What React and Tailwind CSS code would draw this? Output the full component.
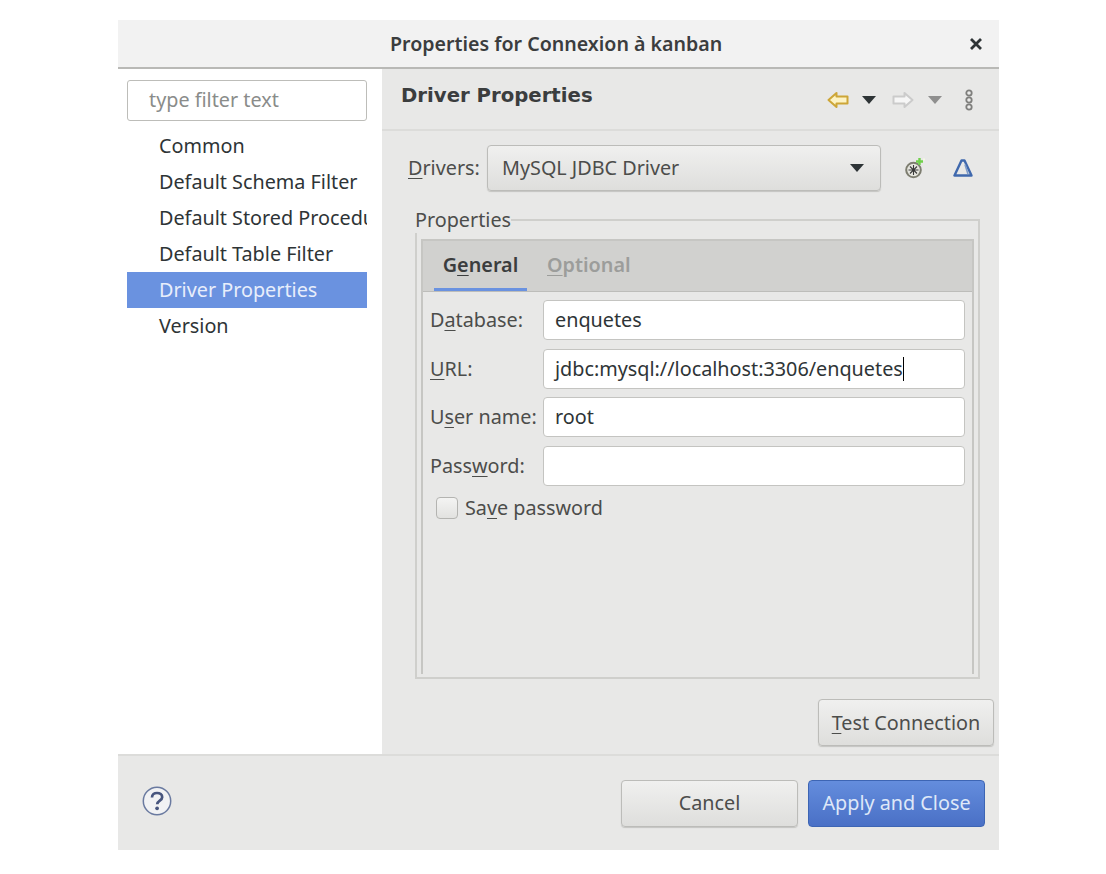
import React from 'react';

const textFont = "font-['Noto_Sans','Open_Sans',sans-serif]";

function Mnemonic({ text, at }) {
  return (
    <>
      {text.slice(0, at)}
      <span className="underline underline-offset-[3px] decoration-1">{text[at]}</span>
      {text.slice(at + 1)}
    </>
  );
}

function BackArrow() {
  return (
    <svg width="22" height="18" viewBox="0 0 22 18">
      <path d="M1.5 9 L9.5 2 V5.5 H20.5 V12.5 H9.5 V16 Z" fill="#fdf3c4" stroke="#cda637" strokeWidth="2" strokeLinejoin="round" />
    </svg>
  );
}

function ForwardArrow() {
  return (
    <svg width="22" height="18" viewBox="0 0 22 18">
      <path d="M20.5 9 L12.5 2 V5.5 H1.5 V12.5 H12.5 V16 Z" fill="#f6f6f6" stroke="#cbcbcb" strokeWidth="2" strokeLinejoin="round" />
    </svg>
  );
}

function Caret({ color }) {
  return (
    <svg width="14" height="8" viewBox="0 0 14 8">
      <path d="M0 0 H14 L7 8 Z" fill={color} />
    </svg>
  );
}

function MenuDots() {
  return (
    <svg width="10" height="22" viewBox="0 0 10 22">
      <circle cx="5" cy="4" r="2.7" fill="#ececeb" stroke="#7f7f7d" strokeWidth="1.8" />
      <circle cx="5" cy="11" r="2.7" fill="#ececeb" stroke="#7f7f7d" strokeWidth="1.8" />
      <circle cx="5" cy="18" r="2.7" fill="#ececeb" stroke="#7f7f7d" strokeWidth="1.8" />
    </svg>
  );
}

function NewDriver() {
  return (
    <svg width="22" height="22" viewBox="0 0 22 22">
      <circle cx="9.5" cy="13" r="7.3" fill="#e6e6df" stroke="#7d7d70" strokeWidth="2" />
      <path d="M9.5 8 V18 M4.5 13 H14.5 M6 9.5 L13 16.5 M13 9.5 L6 16.5" stroke="#3a3a3a" strokeWidth="1.1" />
      <path d="M15.5 1 V8 M12 4.5 H19" stroke="#6fd04a" strokeWidth="2.4" />
      <path d="M19 1.5 H21 V3.5 H19 Z" fill="#f5f8e6" />
    </svg>
  );
}

function Delta() {
  return (
    <svg width="20" height="18" viewBox="0 0 20 18">
      <path d="M8.5 1.5 L1.5 16.5 H18.5 L11.5 1.5 Z" fill="none" stroke="#3f68ad" strokeWidth="2.4" strokeLinejoin="round" />
      <path d="M12 5.5 L15 15" stroke="#7f9cc9" strokeWidth="1.6" />
    </svg>
  );
}

function HelpIcon() {
  return (
    <svg width="30" height="30" viewBox="0 0 30 30">
      <circle cx="15" cy="15" r="13.7" fill="#f1f2f4" stroke="#6a7aa0" strokeWidth="1.5" />
      <path d="M10 11.5 C10 8.5 12.3 7 15 7 C18 7 20.2 8.7 20.2 11.2 C20.2 14.6 15.4 14.6 15.2 18.2" fill="none" stroke="#47557e" strokeWidth="2.7" />
      <circle cx="15.1" cy="22.3" r="1.9" fill="#47557e" />
    </svg>
  );
}

function FieldRow({ label, value, cursor }) {
  return (
    <div className="flex items-center h-[40px]">
      <label className="w-[120px] pl-[7px] text-[#4c4d4b] whitespace-nowrap">{label}</label>
      <div className="w-[422px] h-[40px] bg-white border border-[#c4c4c1] rounded-[4px] px-[11px] flex items-center text-[#2e3436]">
        <span>{value}</span>
        {cursor && <span className="w-px h-[24px] bg-black" />}
      </div>
    </div>
  );
}

const pages = ['Common', 'Default Schema Filter', 'Default Stored Procedures', 'Default Table Filter', 'Driver Properties', 'Version'];

export default function App() {
  return (
    <div className={`min-h-screen bg-white pt-[20px] pl-[118px] text-[19.8px] ${textFont}`}>
      <div className="w-[881px] h-[830px] flex flex-col bg-[#e8e8e7]">
        {/* Title bar */}
        <div className="h-[49px] shrink-0 bg-[#f2f2f2] border-b-2 border-[#b9b9b6] flex items-center pl-[272px] pr-[16px]">
          <h1 className="flex-1 text-[19.6px] font-semibold text-[#3b3d3e]">Properties for Connexion à kanban</h1>
          <svg width="14" height="14" viewBox="0 0 14 14">
            <path d="M2 2 L12 12 M12 2 L2 12" stroke="#2e3436" strokeWidth="2.8" />
          </svg>
        </div>

        <div className="flex-1 flex min-h-0">
          {/* Left tree */}
          <div className="w-[264px] shrink-0 bg-white pt-[11px] px-[9px]">
            <div className="h-[41px] w-[240px] border border-[#bdbdb9] rounded-[3px] flex items-center pl-[21px] pb-[2px] text-[#8a8c8a]">
              type filter text
            </div>
            <div className="w-[240px] mt-[7px] overflow-hidden">
              {pages.map((page) => (
                <div
                  key={page}
                  className={`h-[36px] pl-[32px] flex items-center whitespace-nowrap ${
                    page === 'Driver Properties' ? 'bg-[#6a92e0] text-[#e8eefb]' : 'text-[#2e3436]'
                  }`}
                >
                  {page}
                </div>
              ))}
            </div>
          </div>

          {/* Right page */}
          <div className="flex-1 flex flex-col min-w-0">
            <div className="h-[62px] shrink-0 border-b-2 border-[#dcdcda] flex pl-[19px] pr-[25px]">
              <h2 className="flex-1 pt-[13px] text-[19.7px] leading-[28px] font-bold font-['DejaVu_Sans',sans-serif] text-[#3b3d3e]">Driver Properties</h2>
              <div className="flex items-center h-[61px]">
                <BackArrow />
                <span className="ml-[13px]"><Caret color="#2e3436" /></span>
                <span className="ml-[16px]"><ForwardArrow /></span>
                <span className="ml-[14px]"><Caret color="#8f8f8f" /></span>
                <span className="ml-[22px]"><MenuDots /></span>
              </div>
            </div>

            <div className="flex items-center mt-[14px] pl-[26px] h-[46px]">
              <span className="w-[79px] text-[#4c4d4b]"><Mnemonic text="Drivers:" at={0} /></span>
              <div className="w-[394px] h-[46px] border border-[#bcbcb9] rounded-[4px] bg-gradient-to-b from-[#f0f0ef] to-[#dededc] shadow-[0_1px_1px_#c4c4c1] flex items-center justify-between pl-[14px] pr-[16px] text-[#4c4d4b]">
                <span>MySQL JDBC Driver</span>
                <Caret color="#2e3436" />
              </div>
              <span className="ml-[23px]"><NewDriver /></span>
              <span className="ml-[27px]"><Delta /></span>
            </div>

            <fieldset className="ml-[33px] mt-[15px] w-[565px] h-[473px] border-2 border-[#cfcfcc] px-[4px] pb-[4px]">
              <legend className="text-[#4c4d4b] leading-[27px] -ml-[6px]">Properties</legend>
              <div className="h-[435px] mt-[6px] border-x-2 border-t-2 border-[#c6c6c3]">
                <div className="h-[51px] bg-[#d1d1cf] border-b border-[#bdbdba] pl-[11px] flex gap-[20px]">
                  <div className="w-[93px] h-full flex items-center justify-center border-b-[3px] border-[#6a92e0] font-semibold text-[#3b3d3e]">
                    <span><Mnemonic text="General" at={1} /></span>
                  </div>
                  <div className="h-full flex items-center border-b-[3px] border-transparent font-semibold text-[#9c9d9b]">
                    <span><Mnemonic text="Optional" at={0} /></span>
                  </div>
                </div>
                <div className="pt-[8px] flex flex-col gap-[8.6px]">
                  <FieldRow label={<Mnemonic text="Database:" at={1} />} value="enquetes" />
                  <FieldRow label={<Mnemonic text="URL:" at={0} />} value="jdbc:mysql://localhost:3306/enquetes" cursor />
                  <FieldRow label={<Mnemonic text="User name:" at={1} />} value="root" />
                  <FieldRow label={<Mnemonic text="Password:" at={4} />} value="" />
                </div>
                <div className="flex items-center mt-[7px] ml-[13px] text-[#4c4d4b]">
                  <span className="w-[22px] h-[22px] border border-[#b4b4b1] rounded-[4px] bg-gradient-to-b from-[#f4f4f3] to-[#e2e2e0]" />
                  <span className="ml-[7px]"><Mnemonic text="Save password" at={2} /></span>
                </div>
              </div>
            </fieldset>

            <div className="flex justify-end pr-[5px] mt-[20px]">
              <button className="w-[176px] h-[47px] border border-[#bcbcb9] rounded-[4px] bg-gradient-to-b from-[#f0f0ef] to-[#dededc] shadow-[0_1px_1px_#c4c4c1] text-[#4c4d4b]">
                <Mnemonic text="Test Connection" at={0} />
              </button>
            </div>
          </div>
        </div>

        {/* Footer */}
        <div className="h-[96px] shrink-0 border-t-2 border-[#dcdcda] flex items-center pl-[24px] pr-[14px]">
          <span className="-mt-[4px]"><HelpIcon /></span>
          <div className="flex-1 flex justify-end gap-[10px]">
            <button className="w-[177px] h-[47px] border border-[#bcbcb9] rounded-[4px] bg-gradient-to-b from-[#f0f0ef] to-[#dededc] shadow-[0_1px_1px_#c4c4c1] text-[#4c4d4b]">
              Cancel
            </button>
            <button className="w-[177px] h-[47px] border border-[#3d65b4] rounded-[4px] bg-gradient-to-b from-[#648ddd] to-[#4a70c6] text-[#dfe8f8]">
              Apply and Close
            </button>
          </div>
        </div>
      </div>
    </div>
  );
}
